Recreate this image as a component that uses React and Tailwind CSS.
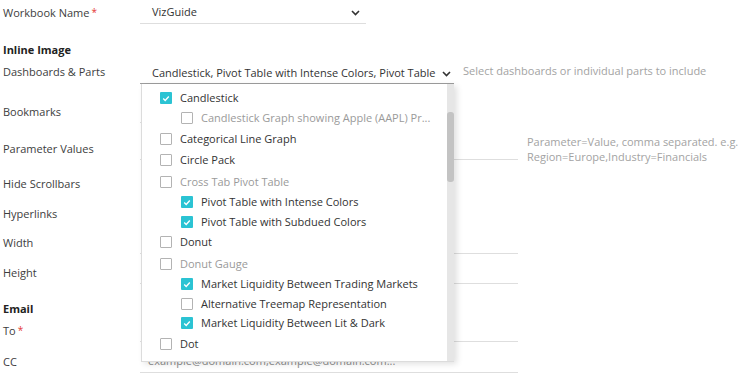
import React from 'react';

const items = [
  { label: 'Candlestick', level: 0, checked: true },
  { label: 'Candlestick Graph showing Apple (AAPL) Pr...', level: 1, muted: true },
  { label: 'Categorical Line Graph', level: 0 },
  { label: 'Circle Pack', level: 0 },
  { label: 'Cross Tab Pivot Table', level: 0, muted: true },
  { label: 'Pivot Table with Intense Colors', level: 1, checked: true },
  { label: 'Pivot Table with Subdued Colors', level: 1, checked: true },
  { label: 'Donut', level: 0 },
  { label: 'Donut Gauge', level: 0, muted: true },
  { label: 'Market Liquidity Between Trading Markets', level: 1, checked: true },
  { label: 'Alternative Treemap Representation', level: 1 },
  { label: 'Market Liquidity Between Lit & Dark', level: 1, checked: true },
  { label: 'Dot', level: 0 },
];

const Chevron = () => (
  <svg width="9" height="6" viewBox="0 0 9 6" fill="none">
    <path d="M1 1l3.5 3.5L8 1" stroke="#333" strokeWidth="1.6" />
  </svg>
);

const Check = ({ checked }) =>
  checked ? (
    <span className="flex h-[12px] w-[12px] shrink-0 items-center justify-center rounded-[1px] bg-[#2bc3d3]">
      <svg width="10" height="10" viewBox="0 0 10 10" fill="none">
        <path d="M2.2 5.6l2 1.8L7.8 3.6" stroke="#fff" strokeWidth="1.4" />
      </svg>
    </span>
  ) : (
    <span className="h-[12px] w-[12px] shrink-0 rounded-[1px] border border-[#b3b3b3] bg-white" />
  );

const Required = () => <span className="ml-[2px] text-[10px] text-[#e53935] align-top">*</span>;

// one form row: label column + field
const Row = ({ label, className = '', children }) => (
  <div className={`flex h-[22px] items-center ${className}`}>
    <div className="w-[137px] shrink-0 text-[#3d3d3d]">{label}</div>
    {children}
  </div>
);

const Line = ({ w = 'w-[378px]', children }) => (
  <div className={`h-full ${w} border-b border-[#dedede] flex items-center px-[8px]`}>{children}</div>
);

export default function App() {
  return (
    <div
      className="relative h-[378px] w-[739px] overflow-hidden bg-white pl-[3px] pt-[2px] text-[11px]"
      style={{ fontFamily: '"Open Sans", "Noto Sans", sans-serif' }}
    >
      <Row label={<>Workbook Name<Required /></>}>
        <div className="flex h-full w-[226px] items-center justify-between border-b border-[#dedede] pl-[12px] pr-[6px] text-[#333]">
          <span>VizGuide</span>
          <Chevron />
        </div>
      </Row>

      <div className="mt-[15px] flex h-[22px] items-center font-bold text-[#222]">Inline Image</div>

      <Row label="Dashboards & Parts" className="mt-[3px] !items-start">
        <div className="relative z-10 h-[20px] w-[314px]">
          <div className="flex h-full items-center justify-between border-b border-[#9d9d9d] pl-[12px] pr-[3px] text-[#333]">
            <span>Candlestick, Pivot Table with Intense Colors, Pivot Table</span>
            <Chevron />
          </div>
          {/* open dropdown list */}
          <div className="absolute left-[1px] top-full h-[278px] w-[313px] border-b border-l border-[#dcdcdc] bg-white pt-[3px] shadow-[3px_2px_6px_rgba(0,0,0,0.12)]">
            {items.map((it) => (
              <div
                key={it.label}
                className={`flex items-center gap-[8px] ${it.level ? 'h-[19.5px] pl-[39px]' : 'h-[21.5px] pl-[18px]'} ${
                  it.muted ? 'text-[#9a9a9a]' : 'text-[#333]'
                }`}
              >
                <Check checked={it.checked} />
                <span className="whitespace-nowrap">{it.label}</span>
              </div>
            ))}
            <div className="absolute bottom-0 right-0 top-0 w-[7px] bg-[#e6e6e6]">
              <div className="mt-[28px] h-[70px] w-full rounded-[3px] bg-[#c3c3c3]" />
            </div>
          </div>
        </div>
        <span className="ml-[9px] mt-[-1px] text-[#a3a3a3]">Select dashboards or individual parts to include</span>
      </Row>

      <Row label="Bookmarks" className="mt-[15px]">
        <Line w="w-[300px]" />
      </Row>

      <Row label="Parameter Values" className="mt-[15px]">
        <Line />
        <div className="ml-[9px] leading-[15px] text-[#a3a3a3]">
          <div>Parameter=Value, comma separated. e.g.</div>
          <div>Region=Europe,Industry=Financials</div>
        </div>
      </Row>

      <Row label="Hide Scrollbars" className="mt-[13px]">
        <span className="ml-[14px]"><Check /></span>
      </Row>

      <Row label="Hyperlinks" className="mt-[8px]">
        <span className="ml-[14px]"><Check /></span>
      </Row>

      <Row label="Width" className="mt-[7px]">
        <Line />
      </Row>

      <Row label="Height" className="mt-[8px]">
        <Line />
      </Row>

      <div className="mt-[14px] flex h-[22px] items-center font-bold text-[#222]">Email</div>

      <Row label={<>To<Required /></>}>
        <Line />
      </Row>

      <Row label="CC" className="mt-[9px]">
        <Line>
          <span className="text-[#8a8a8a]">example@domain.com,example@domain.com...</span>
        </Line>
      </Row>
    </div>
  );
}
